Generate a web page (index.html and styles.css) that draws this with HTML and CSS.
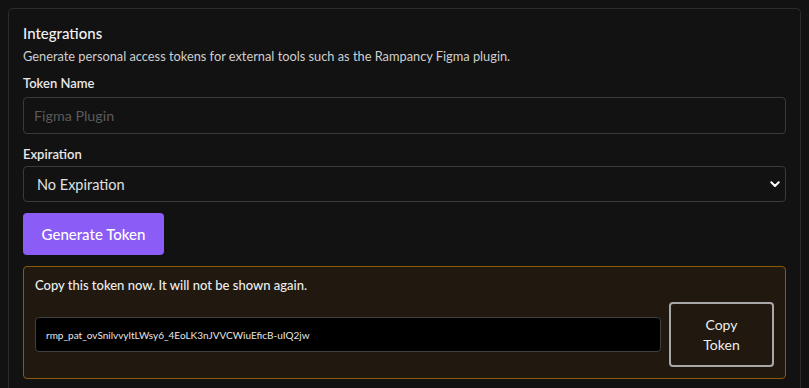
FILE: index.html
```html
<!DOCTYPE html>
<html>
<head>
<meta charset="utf-8">
<link rel="stylesheet" href="styles.css">
</head>
<body>
<section class="card">
  <h2 class="title">Integrations</h2>
  <p class="desc">Generate personal access tokens for external tools such as the Rampancy Figma plugin.</p>
  <label class="label" for="tn">Token Name</label>
  <input id="tn" class="field" type="text" placeholder="Figma Plugin">
  <label class="label" for="exp">Expiration</label>
  <div class="select">
    <span class="select-text">No Expiration</span>
    <svg class="chev" width="10" height="7" viewBox="0 0 10 7"><path d="M1.3 1.3 L5 5 L8.7 1.3" fill="none" stroke="#fff" stroke-width="2" stroke-linecap="round" stroke-linejoin="round"/></svg>
  </div>
  <button class="primary">Generate Token</button>
  <div class="notice">
    <p class="notice-text">Copy this token now. It will not be shown again.</p>
    <div class="token-row">
      <div class="token">rmp_pat_ovSnilvvyltLWsy6_4EoLK3nJVVCWiuEficB-uIQ2jw</div>
      <button class="copy">Copy<br>Token</button>
    </div>
  </div>
</section>
</body>
</html>
```
FILE: styles.css
```css
html, body {
  margin: 0;
  padding: 0;
  background: #121212;
  font-family: Lato, "Noto Sans", sans-serif;
  color: #f0f0f0;
}
body {
  padding: 8px 8px 0;
  height: 388px;
  box-sizing: border-box;
  overflow: hidden;
}
.card {
  border: 1px solid #2b2b2b;
  border-bottom: 0;
  border-radius: 5px 5px 0 0;
  background: #121212;
  padding: 14px 14px 0;
  height: 380px;
  box-sizing: border-box;
  display: flex;
  flex-direction: column;
}
.title {
  margin: 0;
  font-size: 15px;
  font-weight: 500;
  line-height: 20px;
  color: #f2f2f2;
}
.desc {
  margin: 4px 0 0;
  font-size: 12.8px;
  line-height: 18px;
  color: #cfcfcf;
}
.label {
  font-size: 13px;
  font-weight: 600;
  line-height: 16px;
  color: #e8e8e8;
  margin-top: 10px;
}
.field {
  margin-top: 6px;
  height: 37px;
  box-sizing: border-box;
  background: #121212;
  border: 1px solid #3a3a3a;
  border-radius: 4px;
  padding: 0 10px;
  font-family: inherit;
  font-size: 14.3px;
  color: #ddd;
  outline: none;
}
.field::placeholder { color: #5a5a5a; }
.field + .label { margin-top: 12px; }
.select {
  margin-top: 4px;
  height: 36px;
  box-sizing: border-box;
  border: 1px solid #3a3a3a;
  border-radius: 4px;
  display: flex;
  align-items: center;
  justify-content: space-between;
  padding: 0 5px 0 13px;
}
.select-text { font-size: 14.5px; color: #e0e0e0; }
.primary {
  align-self: flex-start;
  margin-top: 11px;
  width: 141px;
  height: 42px;
  border: 0;
  border-radius: 4px;
  background: #8b5cf6;
  color: #fff;
  font-family: inherit;
  font-size: 15px;
  font-weight: 500;
}
.notice {
  margin-top: 11px;
  border: 1px solid #8a5a0c;
  border-radius: 4px;
  background: #21190f;
  padding: 9px 11px 11px;
}
.notice-text {
  margin: 0 0 8px 0;
  font-size: 13px;
  font-weight: 500;
  line-height: 18px;
  color: #eeeeee;
}
.token-row {
  display: flex;
  align-items: center;
  gap: 8px;
}
.token {
  flex: 1;
  height: 35px;
  box-sizing: border-box;
  background: #000;
  border: 1px solid #404040;
  border-radius: 4px;
  display: flex;
  align-items: center;
  padding: 0 10px;
  font-size: 10px;
  color: #e6e6e6;
}
.copy {
  width: 105px;
  height: 65px;
  box-sizing: border-box;
  background: transparent;
  border: 2px solid #a8a8a8;
  border-radius: 4px;
  color: #eee;
  font-family: inherit;
  font-size: 14px;
  line-height: 20px;
}
```
